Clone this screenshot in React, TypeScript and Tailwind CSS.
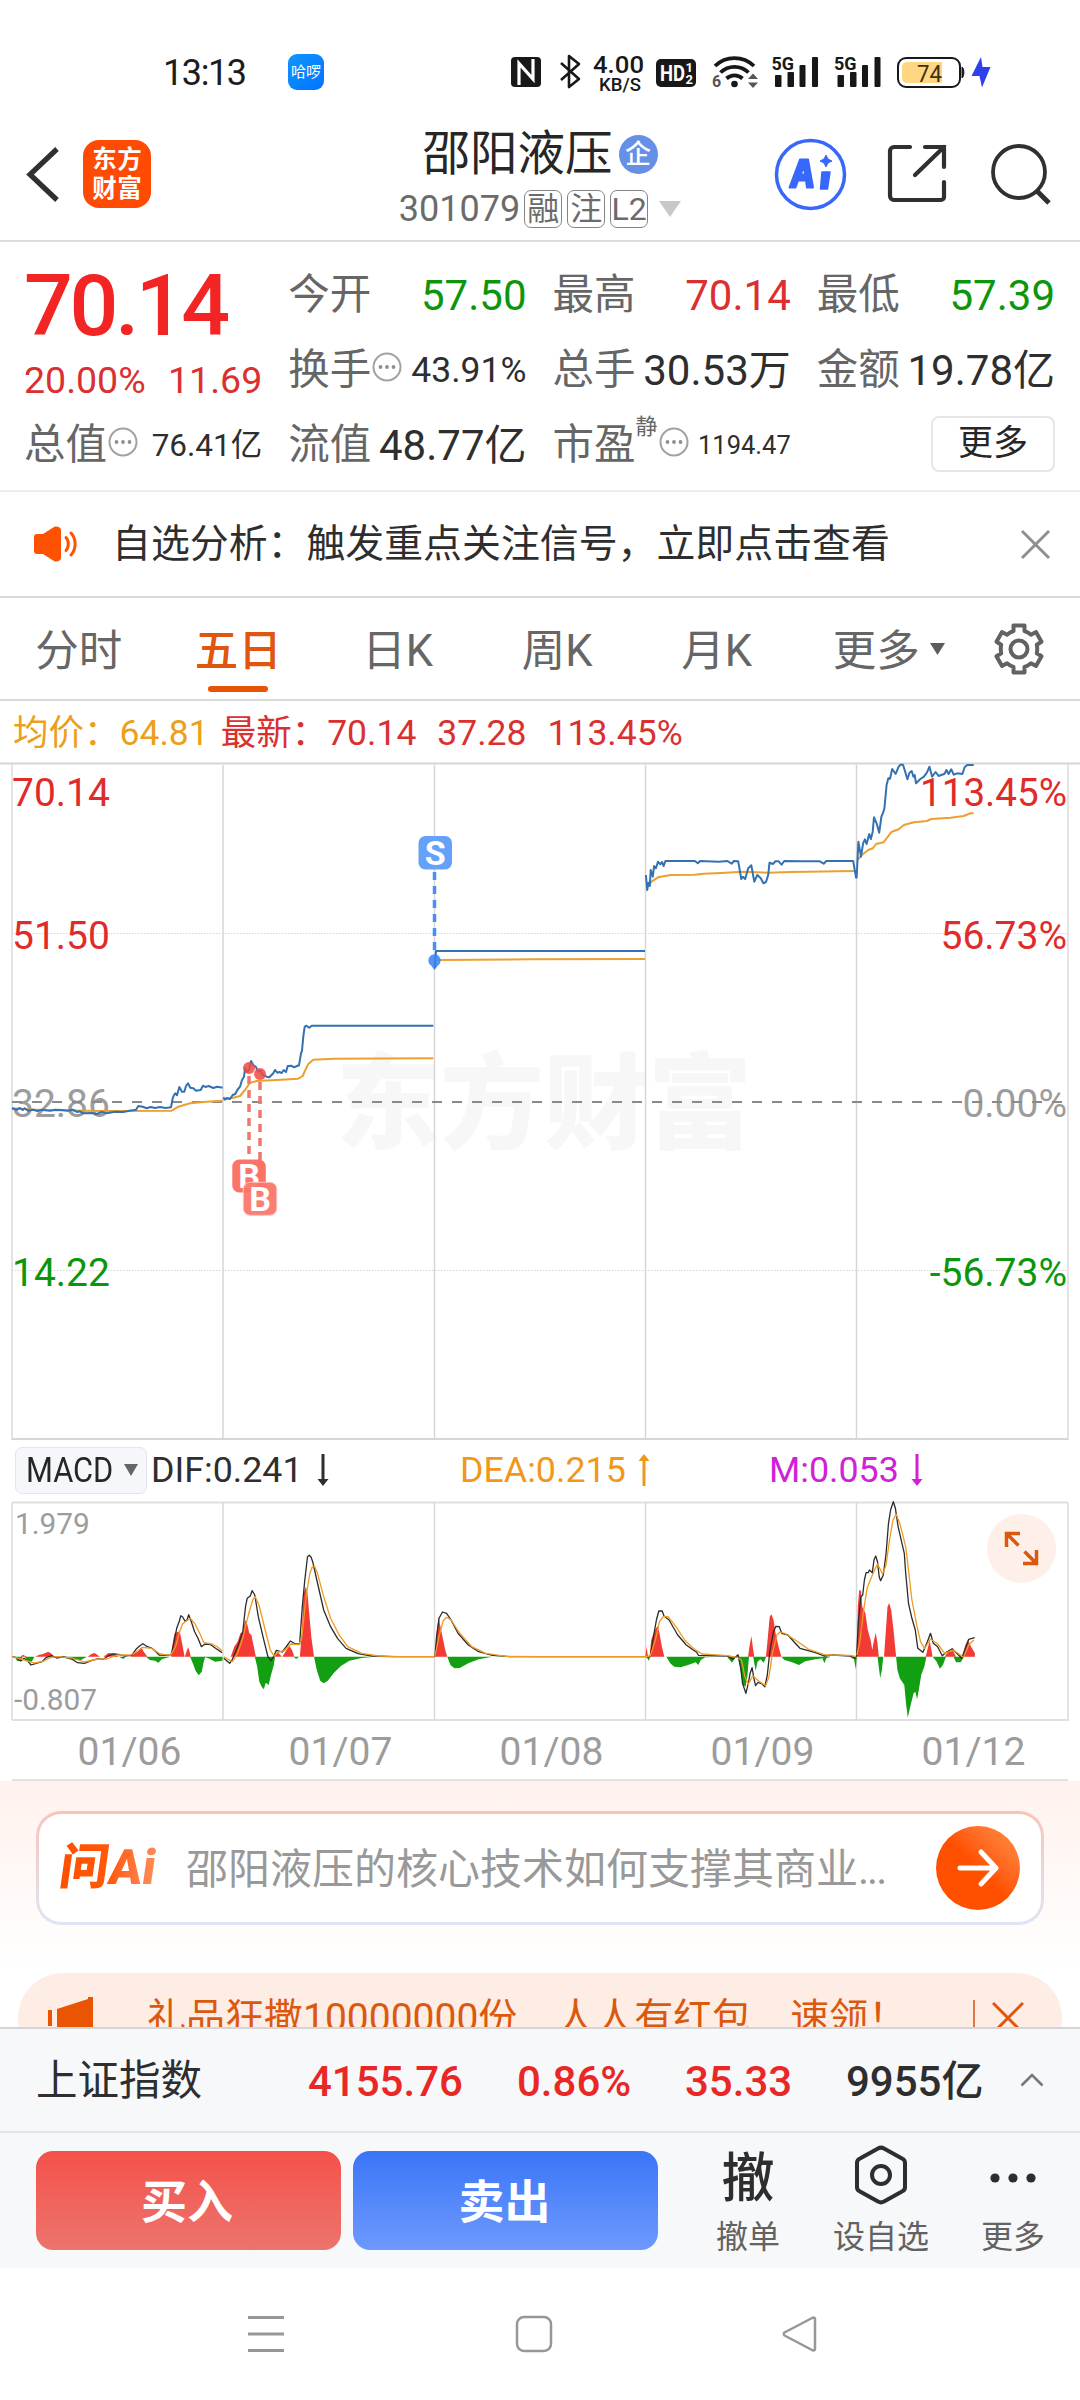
import React from 'react'

type Pt = [number, number]

interface Scale {
  x0: number
  sx: number
  y0: number
  sy: number
}

const parse = (raw: string): Pt[] =>
  raw
    .trim()
    .split(/\s+/)
    .map((pair) => pair.split(',').map(Number) as Pt)

const project = (raw: string, s: Scale) =>
  parse(raw)
    .map(([x, y]) => `${(s.x0 + x / s.sx).toFixed(1)},${(s.y0 + y / s.sy).toFixed(1)}`)
    .join(' ')

// Price panel: the first two sessions and the last three use different x units
const EARLY: Scale = { x0: 0, sx: 3, y0: 0, sy: 3 }
const LATE: Scale = { x0: 400, sx: 2.306, y0: 0, sy: 3 }

const PRICE: { scale: Scale; price: string; avg: string }[] = [
  {
    scale: EARLY,
    price:
      '36,1045 50,1049 60,1044 68,1050 74,1045 84,1052 100,1049 112,1053 125,1049 150,1052 165,1049 185,1050 205,1052 218,1049 232,1056 240,1054 250,1060 275,1059 290,1062 305,1056 320,1060 345,1055 370,1056 388,1052 408,1049 415,1038 428,1040 440,1045 452,1041 465,1044 480,1041 497,1044 513,1042 518,1015 522,1005 526,1000 531,1006 538,981 546,995 553,995 558,978 564,970 571,983 580,985 588,992 602,990 609,977 616,981 626,978 640,984 652,980 668,983',
    avg: '36,1045 120,1050 300,1053 515,1052 535,1040 570,1030 620,1025 668,1022',
  },
  {
    scale: EARLY,
    price:
      '670,1012 675,1019 680,1014 690,1017 698,1005 706,1002 712,990 720,980 726,960 732,950 735,925 741,935 747,930 753,903 760,915 768,921 774,935 782,932 788,945 800,950 808,952 820,940 825,930 832,938 838,936 845,939 851,930 858,936 863,918 874,917 882,922 897,916 903,880 906,872 910,830 914,800 918,797 928,803 935,797 1300,797',
    avg: '670,1018 700,1013 720,1008 735,990 750,968 770,963 830,960 895,956 908,948 915,932 925,912 940,899 1000,896 1300,895',
  },
  {
    scale: LATE,
    price: '80,625 83,573 565,573',
    avg: '88,600 300,598 565,597',
  },
  {
    scale: LATE,
    price:
      '567,345 570,390 573,368 576,378 578,330 583,350 586,318 590,325 595,305 600,313 604,306 608,318 612,303 680,303 687,310 692,303 735,305 755,303 765,311 770,303 780,304 787,357 791,350 796,357 803,325 810,316 817,365 824,345 832,355 838,370 844,366 849,345 852,308 860,312 866,304 873,304 880,314 886,303 930,304 968,304 977,311 983,303 1045,303 1052,355',
    avg: '572,378 580,365 595,352 625,345 680,344 700,341 740,339 790,335 850,338 900,336 1050,333',
  },
  {
    scale: LATE,
    price:
      '1053,355 1057,245 1063,290 1068,250 1072,238 1076,252 1082,222 1086,237 1090,215 1093,172 1099,190 1105,218 1110,170 1114,158 1117,145 1122,75 1126,55 1130,56 1135,27 1143,42 1149,22 1154,14 1160,14 1165,35 1170,58 1175,38 1180,33 1184,50 1187,45 1190,70 1200,57 1208,50 1215,38 1221,20 1227,50 1235,36 1242,48 1256,41 1260,30 1265,42 1271,28 1277,44 1285,40 1297,42 1302,22 1308,15 1323,15',
    avg: '1055,300 1065,285 1080,270 1090,265 1098,252 1115,247 1125,230 1133,216 1150,208 1162,195 1185,187 1215,183 1225,177 1270,173 1300,168 1315,160 1323,160',
  },
]

const MACD_LEFT: Scale = { x0: 0, sx: 2.904, y0: -80, sy: 3 }
const MACD_RIGHT: Scale = { x0: 540, sx: 2.904, y0: -80, sy: 3 }

const MACD = [
  {
    scale: MACD_LEFT,
    dif: [
      '36,710 45,712 60,723 70,715 80,722 90,735 105,730 122,725 135,712 150,707 165,714 185,710 210,718 225,728 245,730 265,722 285,716 300,718 315,707 330,702 345,703 360,708 382,706 395,688 405,678 415,671 428,680 440,684 450,692 462,705 480,706 497,705 505,668 513,625 520,605 525,587 530,590 537,603 543,600 548,584 555,603 565,635 575,655 585,680 595,672 612,674 625,684 645,698',
      '650,715 667,730 675,718 690,680 705,635 713,560 718,535 727,528 732,512 740,525 750,590 765,655 778,710 787,722 793,712 803,691 820,696 835,675 843,663 858,672 870,672 878,560 885,480 893,410 898,406 903,411 908,425 920,480 940,570 960,620 980,655 1005,685 1040,701 1080,708 1140,710 1262,710',
      '1263,710 1268,650 1275,595 1285,576 1297,580 1310,600 1330,640 1360,675 1390,695 1430,706 1480,710 1568,710',
    ],
    dea: [
      '36,710 70,720 100,729 125,724 145,713 165,710 210,714 245,726 285,717 310,717 340,705 380,705 400,692 415,682 440,685 465,702 495,706 510,680 520,640 530,612 545,600 553,595 565,610 580,640 592,668 615,672 632,681 645,693',
      '650,710 675,725 690,700 705,655 715,610 725,570 735,537 741,530 752,555 770,630 785,690 795,707 810,696 825,692 845,672 868,674 876,655 882,600 890,520 900,460 907,440 913,438 922,460 940,530 960,595 985,645 1010,680 1050,700 1100,708 1160,710 1262,710',
      '1263,710 1275,650 1287,602 1297,592 1310,600 1335,640 1370,680 1410,700 1470,709 1568,710',
    ],
    up: [
      '60,710 66,704 72,707 78,710',
      '102,710 112,705 125,702 140,695 150,701 156,710',
      '255,710 265,702 275,699 290,710',
      '300,710 315,699 330,700 345,710',
      '378,710 390,700 400,695 410,682 418,696 428,710',
      '497,710 503,660 507,640 515,636 522,634 528,665 536,710',
      '537,710 543,690 547,682 554,710',
      '670,710 680,680 690,665 698,640 705,635 712,600 718,612 724,640 730,645 737,680 743,710',
      '797,710 805,695 812,702 818,710',
      '820,710 832,690 840,678 848,690 855,710',
      '871,710 876,640 882,520 888,500 893,520 898,580 904,650 912,710',
      '1263,710 1268,640 1274,592 1280,625 1286,655 1293,690 1299,710',
    ],
    down: [
      '43,710 50,723 60,722 66,710',
      '72,710 80,722 92,725 100,710',
      '165,710 210,718 235,720 252,710',
      '345,710 358,717 366,710',
      '424,710 435,720 450,722 460,728 470,718 495,710',
      '552,710 560,730 568,752 577,766 586,755 591,728 596,710',
      '592,710 605,715 625,725 646,722 646,710',
      '740,710 747,740 753,785 760,800 766,808 772,788 780,795 787,765 795,735 799,710',
      '853,710 860,717 869,710',
      '912,710 920,750 930,782 940,790 952,782 970,758 990,738 1015,722 1050,714 1090,710',
      '1299,710 1308,735 1320,745 1335,744 1360,730 1390,718 1430,710',
    ],
  },
  {
    scale: MACD_RIGHT,
    dif: [
      '0,710 306,710 320,710 328,660 338,600 345,573 355,573 360,588 375,600 400,645 425,675 445,690 455,697 460,706 545,708 560,718 575,705 583,745 588,790 598,820 605,790 610,760 616,743 622,780 626,797 633,787 645,792 653,800 660,765 668,690 678,635 685,619 695,620 702,640 720,645 740,668 755,685 800,698 825,708 850,705 900,708 918,715',
      '919,710 925,600 932,530 937,525 942,480 947,458 953,458 957,450 965,458 970,420 975,408 980,425 985,470 989,482 997,465 1005,400 1012,310 1018,270 1026,245 1032,265 1040,320 1058,400 1062,460 1070,550 1080,595 1090,630 1097,685 1112,697 1125,665 1134,640 1142,670 1155,680 1168,707 1182,695 1197,686 1210,700 1225,715 1237,680 1245,658 1262,653',
    ],
    dea: [
      '0,710 306,710 320,708 335,660 347,605 358,590 372,590 395,620 420,660 445,685 470,702 545,707 575,713 585,720 595,770 605,793 618,767 635,783 655,797 665,770 675,700 688,645 697,636 710,640 745,662 780,688 830,705 900,706 918,710',
      '920,705 928,670 940,570 950,505 965,465 980,432 995,462 1005,435 1015,360 1025,300 1034,283 1045,310 1062,380 1070,450 1080,540 1095,620 1105,665 1117,685 1134,657 1155,672 1175,700 1200,690 1230,712 1245,675 1260,660',
    ],
    up: [
      '306,710 309,680 314,710',
      '318,710 323,660 330,640 337,625 342,618 347,640 354,680 361,710',
      '567,710 575,702 579,710',
      '604,710 609,675 614,648 618,680 622,710',
      '656,710 661,660 667,590 672,583 678,600 685,645 693,680 701,710',
      '920,710 923,560 927,510 932,512 936,560 945,580 952,630 960,660 965,690 969,665 975,638 980,670 984,710',
      '999,710 1004,640 1009,560 1014,549 1020,570 1027,635 1034,710',
      '1120,710 1127,680 1132,664 1140,710',
      '1175,710 1185,695 1200,693 1208,710',
      '1226,710 1235,675 1243,660 1252,680 1263,700 1263,710',
    ],
    down: [
      '309,710 316,722 320,710',
      '367,710 378,730 390,740 408,742 430,735 452,727 460,735 467,720 480,712 540,710',
      '543,710 558,728 568,710',
      '577,710 585,770 590,795 597,800 602,770 607,710',
      '619,710 626,752 632,725 640,718 650,728 657,710',
      '701,710 710,720 730,726 752,735 770,724 800,718 820,715 826,730 832,714 845,710',
      '900,710 912,718 917,748 920,710',
      '980,710 988,774 993,750 997,710',
      '1034,710 1038,750 1045,775 1058,795 1063,850 1068,893 1073,870 1080,840 1085,820 1090,815 1095,838 1100,810 1107,765 1116,740 1122,710',
      '1140,710 1152,725 1161,746 1170,735 1179,710',
      '1201,710 1208,727 1222,727 1231,710',
    ],
  },
]

const SESSION_LINES = [223, 434.5, 645.5, 856.5]

const StatusIcons: React.FC = () => (
  <svg width="500" height="60" viewBox="0 0 500 60" fontFamily="Roboto, sans-serif" fill="#181818">
    {/* nfc */}
    <rect x="11" y="17" width="30" height="30" rx="4" />
    <path d="M19 45V23.500l14 15.500V19" fill="none" stroke="#fff" strokeWidth="3.200" />
    {/* bluetooth */}
    <path d="M61 23l18 16-10 8V16l10 8-18 16" fill="none" stroke="#181818" strokeWidth="2.600" strokeLinejoin="round" />
    <text x="93" y="33" fontSize="24" fontWeight="500" textLength="51" lengthAdjust="spacingAndGlyphs">4.00</text>
    <text x="99" y="50.500" fontSize="18" fontWeight="500" textLength="42" lengthAdjust="spacingAndGlyphs">KB/S</text>
    {/* volte */}
    <rect x="156" y="19" width="40" height="28" rx="5" />
    <text x="160" y="41" fontSize="22" fontWeight="700" fill="#fff" textLength="25" lengthAdjust="spacingAndGlyphs">HD</text>
    <text x="185.500" y="32" fontSize="13" fontWeight="700" fill="#fff">1</text>
    <text x="185.500" y="43.500" fontSize="13" fontWeight="700" fill="#fff">2</text>
    {/* wifi */}
    <g fill="none" stroke="#181818" strokeWidth="3.800">
      <path d="M215 26a28 28 0 0 1 39 0" />
      <path d="M220.500 32.500a20 20 0 0 1 28 0" />
      <path d="M226.500 38.500a12 12 0 0 1 16 0" />
    </g>
    <circle cx="234.500" cy="44" r="3.300" />
    <text x="212" y="47" fontSize="16" fontWeight="700" fill="#555">6</text>
    <path d="M248 39l5-5.500 5 5.500zM248 42.500l5 5.500 5-5.500z" fill="#555" />
    {/* two signal meters */}
    {[0, 62.5].map((dx) => (
      <g key={dx} transform={`translate(${dx} 0)`}>
        <text x="271.500" y="30" fontSize="19" fontWeight="700" textLength="22.500" lengthAdjust="spacingAndGlyphs">5G</text>
        <rect x="275" y="35" width="6.500" height="12" rx="1" />
        <rect x="287.500" y="32" width="6.500" height="15" rx="1" />
        <rect x="299.500" y="25" width="6" height="22" rx="1" />
        <rect x="312" y="17" width="6" height="30" rx="1" />
      </g>
    ))}
    {/* battery */}
    <rect x="398" y="18" width="62" height="29" rx="8" fill="#fff" stroke="#181818" strokeWidth="2" />
    <path d="M407 22h35v21h-35a5 5 0 0 1-5-5V27a5 5 0 0 1 5-5z" fill="#ffd681" />
    <text x="417" y="41.500" fontSize="24" fill="#3d3212" textLength="25" lengthAdjust="spacingAndGlyphs">74</text>
    <path d="M462 27c2.500 1.500 2.500 9.500 0 11z" stroke="#181818" />
    <path d="M481 17l-9.500 19h8L482 47.500l8.500-20.500h-8z" fill="#2f3fee" />
  </svg>
)

const StatusBar: React.FC = () => (
  <div className="flex h-[104px] items-end pl-[163px]">
    <span className="w-[125px] pb-[9px] text-[36px] leading-[44px] tracking-[-1.400px] text-[#1c1c1c]">13:13</span>
    <span className="mb-[14px] flex h-[36px] w-[36px] items-center justify-center rounded-[9px] bg-gradient-to-br from-[#1296ff] to-[#0672ff] text-[15px] text-white">
      哈啰
    </span>
    <div className="ml-auto mr-[80px] h-[64px]">
      <StatusIcons />
    </div>
  </div>
)

const Header: React.FC = () => (
  <header className="grid h-[138px] grid-cols-[1fr_auto_1fr] border-b-2 border-[#dcdcdc]">
    <div className="flex items-start pl-[22px] pt-[36px]">
      <svg width="38" height="67" viewBox="0 0 38 67" fill="none" stroke="#303030" strokeWidth="5.200">
        <path d="M35 9L8 34.500l27 25.500" />
      </svg>
      <div className="ml-[23px] grid size-[68px] grid-cols-2 place-content-center rounded-[16px] bg-[#ff4a03] px-[9px] text-center text-[24.500px] font-bold leading-[29px] text-white">
        <span>东</span>
        <span>方</span>
        <span>财</span>
        <span>富</span>
      </div>
    </div>
    <div className="flex flex-col items-center pt-[22px]">
      <div className="flex items-center gap-[6px] text-[#262626]">
        <h1 className="text-[47.500px] leading-[56px]">邵阳液压</h1>
        <span className="flex size-[39px] items-center justify-center rounded-full bg-[#668fe8] text-[26px] font-medium leading-none text-white">
          企
        </span>
      </div>
      <div className="mt-[8px] flex items-center text-[36px] leading-[38px] text-[#6b6b6b]">
        <span>301079</span>
        <div className="ml-[4px] flex gap-[5px] text-[32px]">
          {['融', '注', 'L2'].map((tag) => (
            <span
              key={tag}
              className="flex h-[38px] w-[38px] items-center justify-center rounded-[7px] border-[1.500px] border-[#858585]"
            >
              {tag}
            </span>
          ))}
        </div>
        <svg className="ml-[11px]" width="22" height="16" fill="#c8c8c8">
          <path d="M0 0h22L11 16z" />
        </svg>
      </div>
    </div>
    <div className="flex items-start justify-end gap-[38px] pr-[28px] pt-[34px]">
      <svg className="-ml-[6px]" width="73" height="73" viewBox="0 0 73 73">
        <circle cx="36.500" cy="36.500" r="34" fill="#fff" stroke="#3868fb" strokeWidth="3.500" />
        <g fill="#3868fb" stroke="#3868fb" strokeLinejoin="round">
          <path d="M15.500 49.500L26 21.500h8l5 28h-6l-1-7h-8l-2.500 7zM26.500 36.500h4.500l-1-8z" strokeWidth="2" fillRule="evenodd" />
          <path d="M48 34h8l-2.500 17h-7z" strokeWidth="1.500" />
          <path d="M52 17l2 4 4 2-4 2-2 4-2-4-4-2 4-2z" strokeWidth="1" />
        </g>
      </svg>
      <svg className="mt-[4px]" width="66" height="66" viewBox="0 0 66 66" fill="none" stroke="#303030" strokeWidth="4.200" strokeLinecap="round">
        <path d="M25 5H9a4 4 0 0 0-4 4v45a4 4 0 0 0 4 4h47a3 3 0 0 0 3-3V40M40 5h19v20M59 5L30 33" />
      </svg>
      <svg className="-ml-[1px] mt-[2px]" width="64" height="66" viewBox="0 0 64 66" fill="none" stroke="#303030" strokeWidth="3.800">
        <circle cx="31" cy="32" r="26" />
        <path d="M49 51l12 12" strokeWidth="5" />
      </svg>
    </div>
  </header>
)

const InfoDot: React.FC = () => (
  <svg width="30" height="30" viewBox="0 0 30 30" className="shrink-0">
    <circle cx="15" cy="15" r="13.500" fill="none" stroke="#a2a2a2" strokeWidth="2" />
    <g fill="#8f8f8f">
      <circle cx="8.500" cy="15" r="1.900" />
      <circle cx="15" cy="15" r="1.900" />
      <circle cx="21.500" cy="15" r="1.900" />
    </g>
  </svg>
)

interface QuoteCellProps {
  label: string
  value: string
  valueClass?: string
  info?: boolean
  sup?: string
}

const QuoteCell: React.FC<QuoteCellProps> = ({ label, value, valueClass = 'text-[42px] text-[#2e2e2e]', info, sup }) => (
  <div className="flex h-[75px] items-center justify-between whitespace-nowrap">
    <div className="flex items-center text-[41.500px] text-[#666]">
      {label}
      {sup && <span className="-mt-[38px] text-[22px]">{sup}</span>}
      {info && (
        <span className="-mt-[8px] ml-[1px]">
          <InfoDot />
        </span>
      )}
    </div>
    <span className={valueClass}>{value}</span>
  </div>
)

const Quote: React.FC = () => (
  <section className="grid h-[250px] grid-cols-4 content-start gap-x-[26px] border-b-2 border-[#ededed] pl-[24px] pr-[25px] pt-[16px]">
    <div className="row-span-2 flex flex-col">
      <div className="mt-[2px] text-[86px] font-medium leading-[92px] tracking-[-3.300px] text-[#f22424]">70.14</div>
      <div className="mt-[6px] flex justify-between text-[37.500px] leading-[44px] text-[#da3030]">
        <span>20.00%</span>
        <span>11.69</span>
      </div>
    </div>
    <QuoteCell label="今开" value="57.50" valueClass="text-[42px] text-[#0b960b]" />
    <QuoteCell label="最高" value="70.14" valueClass="text-[42px] text-[#da3030]" />
    <QuoteCell label="最低" value="57.39" valueClass="text-[42px] text-[#0b960b]" />
    <QuoteCell label="换手" value="43.91%" valueClass="text-[35.5px] text-[#2e2e2e]" info />
    <QuoteCell label="总手" value="30.53万" />
    <QuoteCell label="金额" value="19.78亿" />
    <QuoteCell label="总值" value="76.41亿" valueClass="text-[31.5px] text-[#2e2e2e]" info />
    <QuoteCell label="流值" value="48.77亿" />
    <QuoteCell label="市盈" value="1194.47" valueClass="text-[25.5px] text-[#2e2e2e]" info sup="静" />
    <div className="flex h-[75px] items-center justify-end pb-[4px]">
      <button className="h-[56px] w-[124px] rounded-[8px] border-2 border-[#e6e6e6] text-[35px] leading-none text-[#262626]">更多</button>
    </div>
  </section>
)

const Notice: React.FC = () => (
  <div className="flex h-[106px] items-center border-b-2 border-[#d9d9d9] pl-[33px] pr-[29px]">
    <svg width="46" height="38" viewBox="0 0 46 38" fill="none" stroke="#ff5200" strokeLinecap="round">
      <path
        d="M4 9h6L21 2c2.500-1.300 7 0 7 3v28c0 3-4.500 4.300-7 3L10 29H4a3 3 0 0 1-3-3V12a3 3 0 0 1 3-3z"
        fill="#ff5200"
        stroke="none"
      />
      <path d="M33 12.500c3 3 3 10 0 13M38 8c5.500 6 5.500 16 0 22" strokeWidth="3" />
    </svg>
    <p className="ml-[33px] pt-[1px] text-[38.900px] text-[#2e2e2e]">自选分析：触发重点关注信号，立即点击查看</p>
    <svg className="ml-auto" width="31" height="31" viewBox="0 0 31 31" stroke="#8f8f8f" strokeWidth="3">
      <path d="M2 2l27 27M29 2L2 29" />
    </svg>
  </div>
)

const TABS = ['分时', '五日', '日K', '周K', '月K', '更多']

const Gear: React.FC = () => (
  <svg width="52" height="54" viewBox="0 0 52 54" fill="none" stroke="#626262" strokeWidth="4" strokeLinejoin="round">
    <path d="M20.500 3.500h11v5.500c2.500.8 4.500 2 6.500 3.700l5-2.700 5.500 9.700-4.700 3c.6 3 .6 5.600 0 8.600l4.700 3L43 44l-5-2.700c-2 1.700-4 2.900-6.500 3.700v5.500h-11V45c-2.500-.8-4.500-2-6.500-3.700L9 44l-5.500-9.700 4.700-3c-.6-3-.6-5.600 0-8.600l-4.700-3L9 10l5 2.700c2-1.700 4-2.900 6.500-3.700z" />
    <circle cx="26" cy="27" r="8.500" />
  </svg>
)

const Tabs: React.FC = () => (
  <nav className="flex h-[103px] items-center border-b-2 border-[#d9d9d9]">
    {TABS.map((tab) => {
      const active = tab === '五日'
      return (
        <div
          key={tab}
          className={[
            'relative flex h-full w-[159.5px] items-center justify-center pr-[2px] pt-[6px] text-[43.500px]',
            active ? 'font-medium text-[#e0560e]' : 'text-[#666]',
          ].join(' ')}
        >
          {tab}
          {active && <span className="absolute bottom-[7px] h-[6px] w-[60px] rounded-full bg-[#e85405]" />}
          {tab === '更多' && (
            <svg className="absolute left-[132px] top-[45px]" width="15" height="12" fill="#5c5c5c">
              <path d="M0 0h15L7.500 12z" />
            </svg>
          )}
        </div>
      )
    })}
    <span className="ml-auto mr-[35px]">
      <Gear />
    </span>
  </nav>
)

const PriceChart: React.FC = () => (
  <svg className="block" width="1080" height="680" viewBox="0 0 1080 680" fontFamily="Roboto, sans-serif">
    <text x="544" y="381" textAnchor="middle" fontFamily="'Noto Sans CJK SC', sans-serif" fontSize="104" fontWeight="900" fill="#f7f7f7">
      东方财富
    </text>
    <g stroke="#d6d6d6" strokeWidth="1.500">
      <path d="M0 3.500h1080M11 679h1058" strokeWidth="2" />
      <path d="M12 4v675M1068 4v675" stroke="#e3e3e3" strokeWidth="2" />
      {SESSION_LINES.map((x) => (
        <path key={x} d={`M${x} 5v674`} />
      ))}
      <path d="M12 173.500h1056M12 510.500h1056" strokeWidth="1" strokeDasharray="1.500 1.500" />
    </g>
    <g fontSize="39">
      <g fill="#e02b2b">
        <text x="12" y="45.500">70.14</text>
        <text x="12" y="189">51.50</text>
        <text x="1067" y="45.500" textAnchor="end" textLength="147" lengthAdjust="spacingAndGlyphs">113.45%</text>
        <text x="1067" y="189" textAnchor="end">56.73%</text>
      </g>
      <g fill="#9c9c9c">
        <text x="12" y="357">32.86</text>
        <text x="1067" y="357" textAnchor="end">0.00%</text>
      </g>
      <g fill="#0b960b">
        <text x="12" y="526">14.22</text>
        <text x="1067" y="526" textAnchor="end">-56.73%</text>
      </g>
    </g>
    <path d="M12 342h1056" stroke="#8a8a8a" strokeWidth="2" strokeDasharray="10 10" />
    <g fill="none" strokeWidth="2" strokeLinejoin="round">
      {PRICE.map((s, i) => (
        <React.Fragment key={i}>
          <polyline points={project(s.avg, s.scale)} stroke="#eba02f" />
          <polyline points={project(s.price, s.scale)} stroke="#3471b3" />
        </React.Fragment>
      ))}
    </g>
    {/* trade markers */}
    <g strokeWidth="3.500" strokeDasharray="8 6">
      <path d="M249 316v82M260 322v93" stroke="#f0766b" />
      <path d="M434.500 112v84" stroke="#4a8ff5" />
    </g>
    <g fill="#f04a42" fillOpacity=".85">
      <circle cx="249" cy="308" r="6" />
      <circle cx="260" cy="314" r="6" />
    </g>
    <path d="M434.500 210l-3-4a6.200 6.200 0 1 1 6 0z" fill="#3482f5" fillOpacity=".85" />
    <g fontSize="34" fontWeight="700" textAnchor="middle">
      <rect x="418.500" y="76" width="33.500" height="33.500" rx="7" fill="#64a1f9" />
      <text x="435.200" y="105.200" fill="#fff">S</text>
      <rect x="232.300" y="399.500" width="33.500" height="33" rx="7" fill="#fb7467" />
      <text x="249" y="428.300" fill="#fff">B</text>
      <rect x="243.300" y="422.300" width="33.500" height="33" rx="7" fill="#fb7467" fillOpacity=".93" stroke="#ffc4be" strokeWidth="1" />
      <text x="260" y="451.300" fill="#fff">B</text>
    </g>
  </svg>
)

const Arrow: React.FC<{ up?: boolean }> = ({ up }) => (
  <svg width="12" height="32" viewBox="0 0 12 32" fill="currentColor" className={up ? '' : 'rotate-180'}>
    <path d="M6 0l5.500 7H7.500v25h-3V7H.5z" />
  </svg>
)

const MacdHeader: React.FC = () => (
  <div className="flex h-[60px] items-center pl-[15px] text-[35.800px] leading-none">
    <div className="flex h-[47px] w-[132px] items-center rounded-[7px] border-[1.500px] border-[#e4e6ea] bg-[#f6f7fa] pl-[10px] text-[#262626]">
      <span className="w-[98px] shrink-0 origin-left scale-x-[.86] pt-[2px]">MACD</span>
      <svg width="14" height="12" fill="#666" className="shrink-0">
        <path d="M0 0h14L7 12z" />
      </svg>
    </div>
    <div className="ml-[4px] flex w-[309px] items-center gap-[14px] text-[#2e2e2e]">
      <span className="pt-[2px]">DIF:0.241</span>
      <Arrow />
    </div>
    <div className="flex w-[309px] items-center gap-[12px] text-[#f0981c]">
      <span className="pt-[2px]">DEA:0.215</span>
      <Arrow up />
    </div>
    <div className="flex items-center gap-[12px] text-[#d121d8]">
      <span className="pt-[2px]">M:0.053</span>
      <Arrow />
    </div>
  </div>
)

const MacdChart: React.FC = () => (
  <svg className="block" width="1080" height="222" viewBox="0 0 1080 222" fontFamily="Roboto, sans-serif">
    <g stroke="#d9d9d9" strokeWidth="1.500" fill="none">
      <path d="M12 2.500h1056M12 220h1056V2.500M12 2.500V220" stroke="#e0e0e0" strokeWidth="1.800" />
      {SESSION_LINES.map((x) => (
        <path key={x} d={`M${x} 2.500V220`} />
      ))}
    </g>
    <g fontSize="29.800" fill="#9c9c9c">
      <text x="15" y="34">1.979</text>
      <text x="14" y="210">-0.807</text>
    </g>
    {MACD.map((half, i) => (
      <React.Fragment key={i}>
        {half.up.map((p) => (
          <polygon key={p} points={project(p, half.scale)} fill="#f43a35" />
        ))}
        {half.down.map((p) => (
          <polygon key={p} points={project(p, half.scale)} fill="#12a012" />
        ))}
        <g fill="none" strokeWidth="1.300" strokeLinejoin="round">
          {half.dif.map((p) => (
            <polyline key={p} points={project(p, half.scale)} stroke="#2b2b2b" />
          ))}
          {half.dea.map((p) => (
            <polyline key={p} points={project(p, half.scale)} stroke="#ef9a22" />
          ))}
        </g>
      </React.Fragment>
    ))}
    <circle cx="1021.500" cy="48.500" r="34.500" fill="#fef0e8" />
    <path
      d="M1006.500 47V33.500h13.500M1006.500 33.500l12 12M1036.500 50v13.500H1023M1036.500 63.500l-12-12"
      fill="none"
      stroke="#d9590f"
      strokeWidth="3.500"
    />
  </svg>
)

const DATES = ['01/06', '01/07', '01/08', '01/09', '01/12']

const DateAxis: React.FC = () => (
  <div className="mx-[12px] flex h-[59px] border-b-2 border-[#e2e2e2] pl-[12px] text-[39px] leading-[60px] text-[#9c9c9c]">
    {DATES.map((d) => (
      <span key={d} className="w-[211px] shrink-0 text-center">
        {d}
      </span>
    ))}
  </div>
)

const AskAi: React.FC = () => (
  <section className="h-[192px] bg-gradient-to-b from-[#fff2ed] to-white px-[36px] pt-[30px]">
    <div className="h-[114px] rounded-[25px] bg-gradient-to-b from-[#f8c3b9] to-[#dde5f4] p-[3px]">
      <div className="flex h-full items-center rounded-[22px] bg-white px-[21px]">
        <div className="w-[104px] shrink-0 -skew-x-[8deg] bg-gradient-to-r from-[#ff4f00] via-[#ff5a0a] to-[#ff9560] bg-clip-text text-[49px] font-black leading-[56px] text-transparent">
          问Ai
        </div>
        <span className="ml-[22px] whitespace-nowrap pt-[2px] text-[42px] text-[#999]">
          邵阳液压的核心技术如何支撑其商业<span className="tracking-[-2px]">...</span>
        </span>
        <span className="ml-auto flex size-[84px] shrink-0 items-center justify-center rounded-full bg-gradient-to-tr from-[#ff5000] from-50% to-[#ff9142]">
          <svg width="44" height="40" viewBox="0 0 44 40" fill="none" stroke="#fff" strokeWidth="5" strokeLinecap="round" strokeLinejoin="round">
            <path d="M4 20h36M25 4l15 16-15 16" />
          </svg>
        </span>
      </div>
    </div>
  </section>
)

const Banner: React.FC = () => (
  <div className="h-[54px] overflow-hidden px-[18px]">
    <div className="flex h-[90px] items-center rounded-[45px] bg-[#fdede4] pl-[30px] pr-[38px] text-[#db590f]">
      <svg width="46" height="44" viewBox="0 0 46 44" fill="#ea5504">
        <path d="M0 14h4v16H0zM9 13L40 3V1h5v42h-5v-3L9 31z" />
      </svg>
      <span className="ml-[53px] whitespace-nowrap text-[39px]">礼品狂撒10000000份　人人有红包　速领！</span>
      <span className="ml-auto h-[36px] w-[2px] bg-[#db7a45]" />
      <svg className="ml-[17px]" width="32" height="32" viewBox="0 0 32 32" stroke="#e0560e" strokeWidth="3">
        <path d="M1 1l30 30M31 1L1 31" />
      </svg>
    </div>
  </div>
)

const IndexBar: React.FC = () => (
  <div className="flex h-[106px] items-center whitespace-nowrap border-b-2 border-t-2 border-b-[#e3e4e7] border-t-[#d4d5d9] bg-[#f7f8fa] pl-[36px] pt-[3px] text-[42px] font-medium text-[#ea2727]">
    <span className="w-[272px] text-[41.500px] font-normal text-[#2e2e2e]">上证指数</span>
    <span className="w-[209px]">4155.76</span>
    <span className="w-[168px]">0.86%</span>
    <span className="w-[161px]">35.33</span>
    <span className="w-[174px] text-[#2e2e2e]">9955亿</span>
    <svg className="-mt-[3px]" width="24" height="14" viewBox="0 0 24 14" fill="none" stroke="#777" strokeWidth="2.500">
      <path d="M1.500 12.500L12 2l10.500 10.500" />
    </svg>
  </div>
)

const TradeBar: React.FC = () => (
  <div className="flex h-[135px] bg-[#f7f8fa] pl-[36px] pt-[18px]">
    <button className="h-[99px] w-[305px] rounded-[17px] bg-gradient-to-b from-[#f4514a] to-[#ec736d] pr-[3px] pt-[4px] text-[46px] font-bold text-white">
      买入
    </button>
    <button className="ml-[12px] h-[99px] w-[305px] rounded-[17px] bg-gradient-to-b from-[#3a75f7] to-[#6d99fe] pr-[2px] pt-[4px] text-[46px] font-bold text-white">
      卖出
    </button>
    <div className="ml-[24px] flex text-[32px] leading-[40px] text-[#626262]">
      <div className="flex w-[132px] flex-col items-center">
        <span className="-mt-[2px] h-[68px] text-[53px] font-medium leading-[60px] text-[#2e2e2e]">撤</span>
        撤单
      </div>
      <div className="flex w-[134px] flex-col items-center">
        <span className="-mt-[6px] h-[72px]">
          <svg width="54" height="60" viewBox="0 0 54 60" fill="none" stroke="#2e2e2e" strokeWidth="4" strokeLinejoin="round">
            <path d="M24 3.500a6 6 0 0 1 6 0l18 10a5 5 0 0 1 3 5v23a5 5 0 0 1-3 5l-18 10a6 6 0 0 1-6 0l-18-10a5 5 0 0 1-3-5v-23a5 5 0 0 1 3-5z" />
            <circle cx="27" cy="30" r="9" />
          </svg>
        </span>
        设自选
      </div>
      <div className="flex w-[130px] flex-col items-center">
        <span className="flex h-[66px] items-start pt-[22px]">
          <svg width="46" height="10" fill="#2e2e2e">
            <circle cx="5" cy="5" r="4.600" />
            <circle cx="23" cy="5" r="4.600" />
            <circle cx="41" cy="5" r="4.600" />
          </svg>
        </span>
        更多
      </div>
    </div>
  </div>
)

const SystemNav: React.FC = () => (
  <div className="flex h-[132px] items-start gap-[230px] pl-[247px] pt-[47px]">
    <svg width="38" height="38" viewBox="0 0 38 38" fill="none" stroke="#979797" strokeWidth="3">
      <path d="M1 2.500h36M1 19h36M1 35.500h36" />
    </svg>
    <svg width="38" height="38" viewBox="0 0 38 38" fill="none" stroke="#979797" strokeWidth="2.500">
      <rect x="2" y="2" width="34" height="34" rx="7" />
    </svg>
    <svg className="-ml-[2px]" width="38" height="38" viewBox="0 0 38 38" fill="none" stroke="#979797" strokeWidth="2.500" strokeLinejoin="round">
      <path d="M32 2.500L3.500 17.500a2 2 0 0 0 0 3L32 35.500a2 2 0 0 0 2-2v-29a2 2 0 0 0-2-2z" />
    </svg>
  </div>
)

export default function App() {
  return (
    <div className="flex h-[2400px] w-[1080px] flex-col overflow-hidden bg-white font-[Roboto,'Noto_Sans_CJK_SC',sans-serif] [&>*]:shrink-0">
      <StatusBar />
      <Header />
      <Quote />
      <Notice />
      <Tabs />
      <div className="flex h-[59px] items-center gap-[21px] whitespace-nowrap pl-[13px] pt-[7px] text-[35.500px] text-[#da3030]">
        <span className="-mr-[9px] text-[#eb9f1c]">均价：64.81</span>
        <span>最新：70.14</span>
        <span>37.28</span>
        <span>113.45%</span>
      </div>
      <PriceChart />
      <MacdHeader />
      <MacdChart />
      <DateAxis />
      <AskAi />
      <Banner />
      <IndexBar />
      <TradeBar />
      <SystemNav />
    </div>
  )
}
